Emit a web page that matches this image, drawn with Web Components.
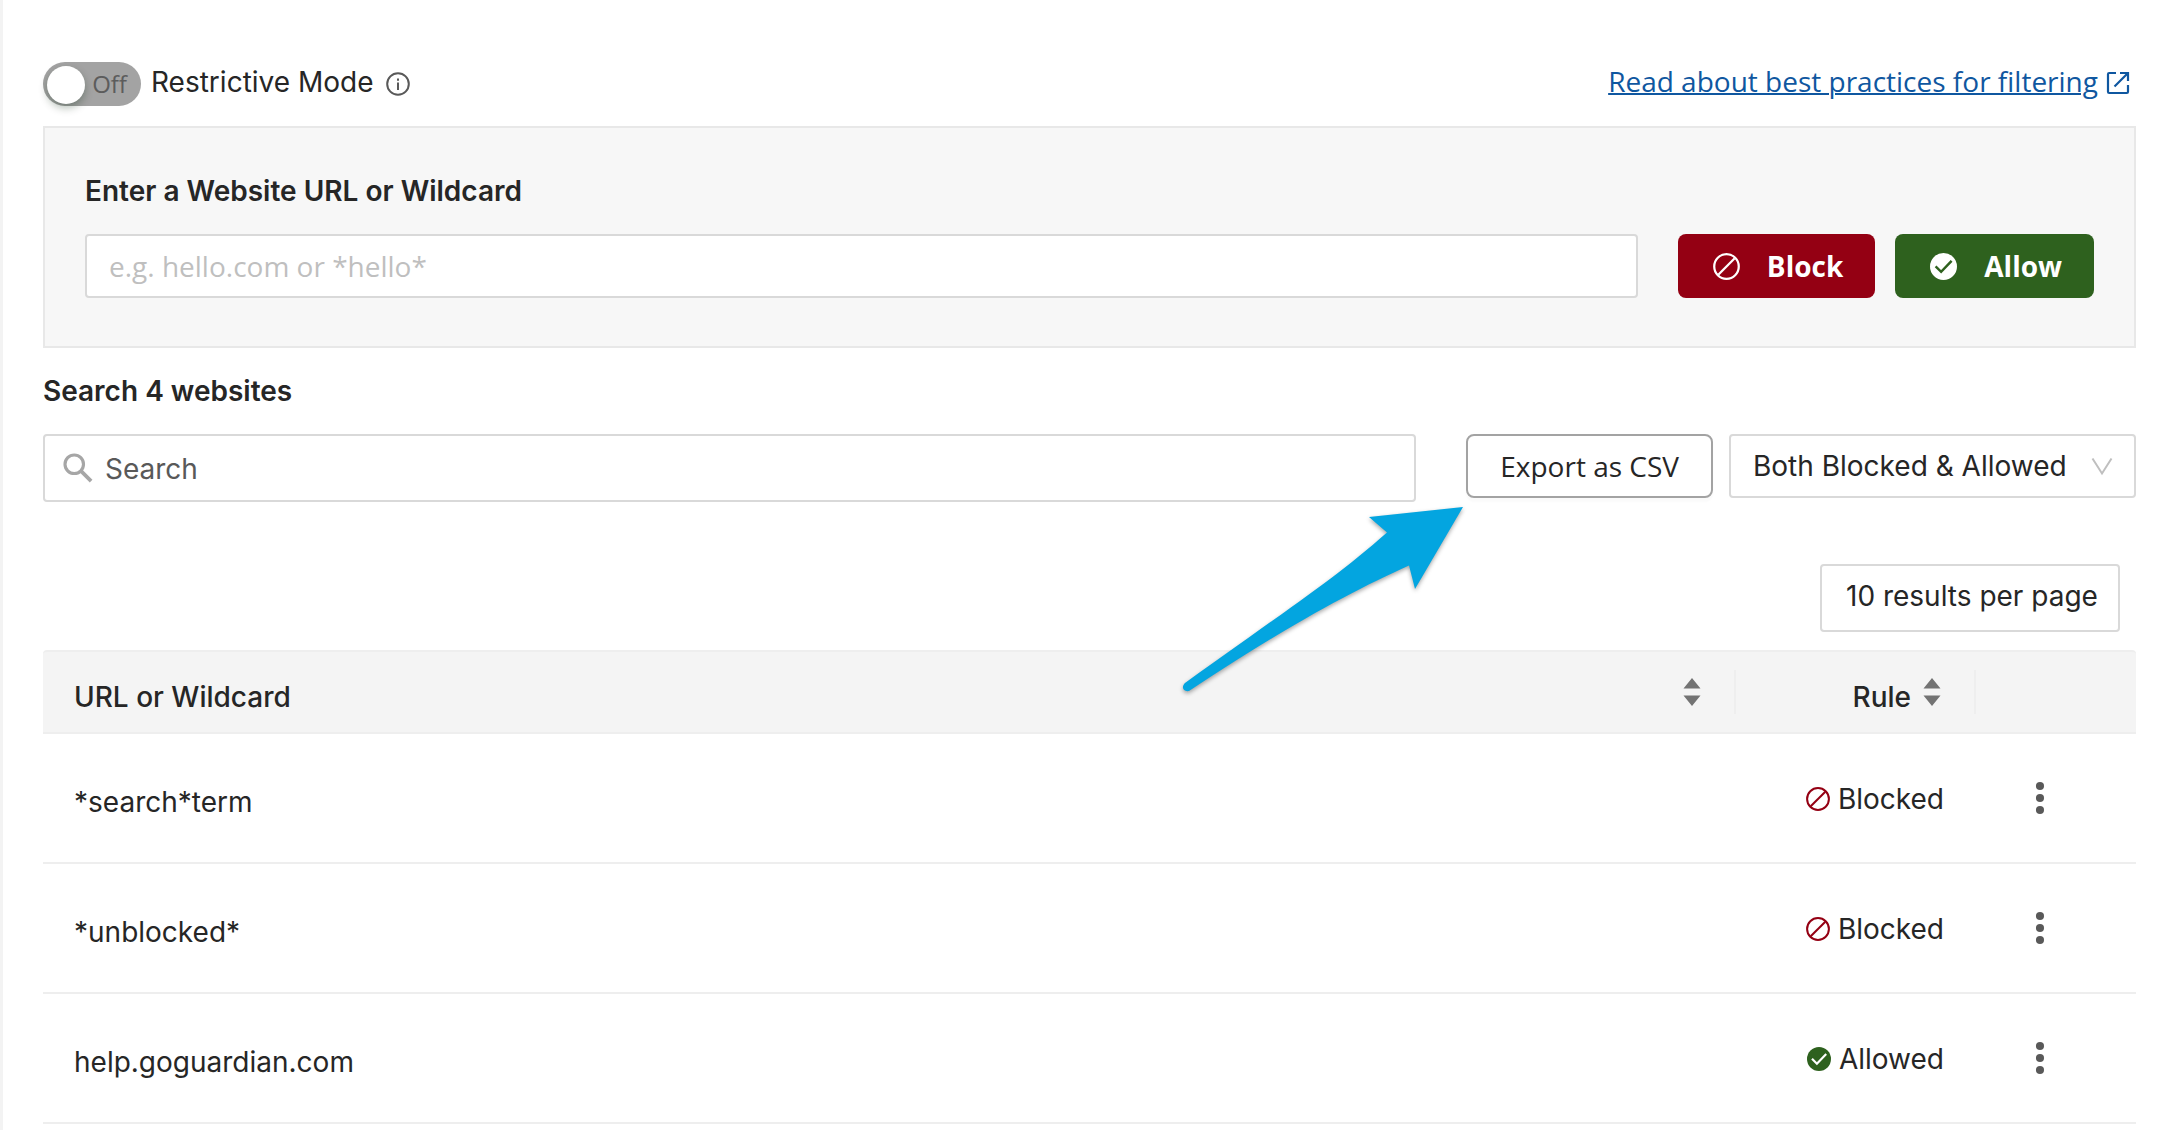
<!DOCTYPE html>
<html lang="en">
<head>
<meta charset="utf-8">
<meta name="viewport" content="width=device-width, initial-scale=1">
<title>Website Filtering</title>
<style>
  body {
    margin: 0;
    font: 28px/40px Inter, "Liberation Sans", sans-serif;
    color: #262626;
    background: #fff;
    --humanist: "Open Sans", "Noto Sans", sans-serif;
    --line: #d9d9d9;
    --soft-line: #eee;
    --red: #940013;
    --green: #2e611e;
  }
</style>
</head>
<body>
<filter-page></filter-page>

<script>
const icons = {
  info: `<circle cx="12" cy="12" r="10.8" fill="none" stroke="currentColor" stroke-width="2"/>
    <path d="M11 10.5h2V18h-2zM11 6.5h2v2.2h-2z" fill="currentColor"/>`,
  external: `<path d="M10 2H3.2A1.2 1.2 0 0 0 2 3.2v17.6A1.2 1.2 0 0 0 3.2 22h17.6a1.2 1.2 0 0 0 1.2-1.2V14M14 2h8v8M21.5 2.5 8.5 15.5" fill="none" stroke="currentColor" stroke-width="2.2"/>`,
  block: `<circle cx="12" cy="12" r="10.9" fill="none" stroke="currentColor" stroke-width="2"/>
    <path d="M19.3 4.7 4.7 19.3" stroke="currentColor" stroke-width="2"/>`,
  check: `<circle cx="12" cy="12" r="12" fill="currentColor"/>
    <path d="m5 11.8 4.9 4.9L19.2 7" fill="none" stroke="var(--mark, #fff)" stroke-width="2.2"/>`,
  search: `<circle cx="9" cy="9" r="7.4" fill="none" stroke="currentColor" stroke-width="2.5"/>
    <path d="m14.5 14.5 8 8" stroke="currentColor" stroke-width="3"/>`,
  chevron: `<path d="m2.5 4.5 9.5 15 9.5-15" fill="none" stroke="currentColor" stroke-width="2"/>`,
  more: `<circle cx="12" cy="4" r="2.7" fill="currentColor"/>
    <circle cx="12" cy="12" r="2.7" fill="currentColor"/>
    <circle cx="12" cy="20" r="2.7" fill="currentColor"/>`,
};

class UiIcon extends HTMLElement {
  constructor() {
    super();
    this.attachShadow({ mode: 'open' });
  }

  connectedCallback() {
    this.shadowRoot.innerHTML = `
      <style>
        :host { display: inline-block; flex: none; width: 24px; height: 24px; }
        svg { display: block; width: 100%; height: 100%; overflow: visible; }
      </style>
      <svg viewBox="0 0 24 24" aria-hidden="true">${icons[this.getAttribute('name')]}</svg>
    `;
  }
}

class ModeSwitch extends HTMLElement {
  constructor() {
    super();
    this.attachShadow({ mode: 'open' }).innerHTML = `
      <style>
        :host { display: flex; align-items: flex-start; gap: 10px; }
        .track {
          position: relative;
          display: flex;
          align-items: center;
          justify-content: flex-end;
          box-sizing: border-box;
          width: 98px;
          height: 44px;
          padding-right: 14px;
          border-radius: 22px;
          background: #a3a3a3;
          color: #5c5c5c;
          font: 24px/32px var(--humanist);
        }
        /* The checkbox is drawn as the knob that lies over the track */
        input {
          appearance: none;
          position: absolute;
          left: 4px;
          top: 4px;
          width: 38px;
          height: 38px;
          margin: 0;
          border-radius: 50%;
          background: #fff;
          box-shadow: 0 4px 8px rgba(0, 35, 11, 0.3);
        }
        input:checked { left: 56px; }
        ui-icon { margin: 10px 0 0 2px; color: #595959; }
      </style>
      <span class="track">
        <input type="checkbox" role="switch" id="mode">
        <span>Off</span>
      </span>
      <label for="mode"><slot></slot></label>
      <ui-icon name="info"></ui-icon>
    `;
  }
}

class UiButton extends HTMLElement {
  constructor() {
    super();
    this.attachShadow({ mode: 'open' }).innerHTML = `
      <style>
        :host { display: block; flex: none; }
        button {
          display: flex;
          align-items: center;
          gap: 27px;
          height: 64px;
          padding: 0 32px 0 35px;
          border: 0;
          border-radius: 8px;
          color: #fff;
          font: 700 28px/40px var(--humanist);
          cursor: pointer;
        }
        :host([kind="block"]) button { background: var(--red); }
        :host([kind="allow"]) button { background: var(--green); --mark: var(--green); }
        :host([kind="plain"]) button {
          padding: 0 32px;
          border: 2px solid #a3a3a3;
          background: #fff;
          color: #262626;
          font-weight: 400;
          box-shadow: 0 4px 2px rgba(0, 0, 0, 0.02);
        }
        ::slotted(ui-icon) { width: 27px; height: 27px; }
      </style>
      <button type="button"><slot name="icon"></slot><span><slot></slot></span></button>
    `;
  }
}

class UiSelect extends HTMLElement {
  constructor() {
    super();
    this.attachShadow({ mode: 'open' });
  }

  connectedCallback() {
    const options = this.getAttribute('options').split('|');
    const arrow = this.hasAttribute('arrow');
    this.shadowRoot.innerHTML = `
      <style>
        :host { display: grid; align-items: center; flex: none; }
        select, ui-icon { grid-area: 1 / 1; }
        select {
          appearance: none;
          box-sizing: border-box;
          width: 100%;
          height: 68px;
          padding: 0 20px 4px 24px;
          border: 2px solid var(--line);
          border-radius: 4px;
          background: #fff;
          color: inherit;
          font: inherit;
        }
        :host([arrow]) select { height: 64px; padding: 0 67px 0 22px; }
        ui-icon { justify-self: end; margin-right: 22px; color: #bfbfbf; pointer-events: none; }
      </style>
      <select aria-label="${this.getAttribute('label')}">
        ${options.map((text) => `<option>${text}</option>`).join('')}
      </select>
      ${arrow ? '<ui-icon name="chevron"></ui-icon>' : ''}
    `;
  }
}

class UrlForm extends HTMLElement {
  constructor() {
    super();
    this.attachShadow({ mode: 'open' }).innerHTML = `
      <style>
        :host {
          display: block;
          padding: 43px 40px 48px;
          border: 2px solid #e8e8e8;
          background: #f7f7f7;
        }
        label { display: block; margin-bottom: 23px; font-weight: 600; }
        .row { display: flex; align-items: flex-start; gap: 20px; }
        input {
          flex: 1;
          min-width: 0;
          box-sizing: border-box;
          height: 64px;
          margin-right: 20px;
          padding: 0 22px;
          border: 2px solid var(--line);
          border-radius: 4px;
          background: #fff;
          color: inherit;
          font: 28px/40px var(--humanist);
        }
        input::placeholder { color: #bfbfbf; opacity: 1; }
      </style>
      <label for="url">Enter a Website URL or Wildcard</label>
      <div class="row">
        <input id="url" type="text" placeholder="e.g. hello.com or *hello*">
        <ui-button kind="block"><ui-icon slot="icon" name="block"></ui-icon>Block</ui-button>
        <ui-button kind="allow"><ui-icon slot="icon" name="check"></ui-icon>Allow</ui-button>
      </div>
    `;
  }
}

class PointerArrow extends HTMLElement {
  constructor() {
    super();
    this.attachShadow({ mode: 'open' }).innerHTML = `
      <style>
        :host { display: block; width: 284px; pointer-events: none; }
        svg { display: block; overflow: visible; filter: drop-shadow(0 2px 2px rgba(0, 0, 0, 0.35)); }
      </style>
      <svg viewBox="0 0 284 200" width="284" height="200" aria-hidden="true">
        <path fill="#03a5e0" d="M281 9 187 19 205 34.5C150 83 110 108 3 185C-1 189 1 194 7 193C100 131 170 93 227 67.5L233 91Z"/>
      </svg>
    `;
  }
}

class SearchBar extends HTMLElement {
  constructor() {
    super();
    this.attachShadow({ mode: 'open' }).innerHTML = `
      <style>
        :host { display: block; }
        label { display: block; margin-bottom: 23px; font-weight: 600; }
        .row { display: flex; align-items: flex-start; gap: 16px; }
        .field {
          flex: 1;
          display: flex;
          align-items: center;
          gap: 12px;
          box-sizing: border-box;
          min-width: 0;
          height: 68px;
          margin-right: 34px;
          padding: 0 18px;
          border: 2px solid var(--line);
          border-radius: 4px;
          background: #fff;
        }
        .field ui-icon { width: 30px; height: 30px; color: #a6a6a6; }
        input {
          flex: 1;
          min-width: 0;
          padding: 2px 0 0;
          border: 0;
          outline: 0;
          background: none;
          color: inherit;
          font: inherit;
        }
        input::placeholder { color: #595959; opacity: 1; }
        .export { position: relative; }
        pointer-arrow { position: absolute; top: 100%; right: 100%; z-index: 1; }
      </style>
      <label for="search"><slot></slot></label>
      <div class="row">
        <div class="field">
          <ui-icon name="search"></ui-icon>
          <input id="search" type="text" placeholder="Search">
        </div>
        <div class="export">
          <ui-button kind="plain">Export as CSV</ui-button>
          <pointer-arrow></pointer-arrow>
        </div>
        <ui-select arrow label="Rule filter" options="Both Blocked &amp; Allowed"></ui-select>
      </div>
    `;
  }
}

const rules = [
  { url: '*search*term', allowed: false },
  { url: '*unblocked*', allowed: false },
  { url: 'help.goguardian.com', allowed: true },
];

class RuleTable extends HTMLElement {
  constructor() {
    super();
    const sorter = `
      <svg class="sorter" viewBox="0 0 18 28" width="18" height="28" aria-hidden="true">
        <path d="M9 0 17.5 10.5H.5zM9 28 .5 17.5h17z" fill="#737373"/>
      </svg>`;

    this.attachShadow({ mode: 'open' }).innerHTML = `
      <style>
        :host { display: block; }
        table { width: 100%; border-spacing: 0; table-layout: fixed; }
        .rule { width: 240px; }
        .actions { width: 160px; }
        th {
          height: 80px;
          padding: 0;
          border: solid var(--soft-line);
          border-width: 2px 0;
          background: #f4f4f4;
          font-weight: 500;
          text-align: left;
        }
        th:first-child { border-top-left-radius: 4px; }
        th:last-child { border-top-right-radius: 4px; }
        .head {
          display: flex;
          align-items: center;
          justify-content: space-between;
          gap: 12px;
          width: 100%;
          height: 44px;
          padding: 0 33px 0 31px;
          border: 0;
          border-right: 2px solid var(--soft-line);
          background: none;
          color: inherit;
          font: inherit;
          cursor: pointer;
        }
        .rule .head { justify-content: flex-end; }
        .head span { padding-top: 10px; }
        td { height: 128px; padding: 0; border-bottom: 2px solid var(--soft-line); }
        .url { height: 120px; padding: 8px 31px 0; }
        .status {
          display: flex;
          align-items: center;
          justify-content: flex-end;
          gap: 8px;
          padding: 2px 32px 0 0;
        }
        .blocked ui-icon { color: var(--red); }
        .allowed ui-icon { color: var(--green); }
        .menu {
          display: flex;
          margin-left: 46px;
          padding: 0;
          border: 0;
          background: none;
          color: #595959;
          cursor: pointer;
        }
        .menu ui-icon { width: 36px; height: 36px; }
      </style>
      <table>
        <thead>
          <tr>
            <th scope="col"><button type="button" class="head"><span>URL or Wildcard</span>${sorter}</button></th>
            <th scope="col" class="rule"><button type="button" class="head"><span>Rule</span>${sorter}</button></th>
            <th class="actions"></th>
          </tr>
        </thead>
        <tbody>
          ${rules.map(({ url, allowed }) => `
            <tr>
              <td class="url">${url}</td>
              <td>
                <div class="status ${allowed ? 'allowed' : 'blocked'}">
                  <ui-icon name="${allowed ? 'check' : 'block'}"></ui-icon>
                  <span>${allowed ? 'Allowed' : 'Blocked'}</span>
                </div>
              </td>
              <td><button type="button" class="menu" aria-label="Actions for ${url}"><ui-icon name="more"></ui-icon></button></td>
            </tr>
          `).join('')}
        </tbody>
      </table>
    `;
  }
}

class FilterPage extends HTMLElement {
  constructor() {
    super();
    this.attachShadow({ mode: 'open' }).innerHTML = `
      <style>
        :host {
          display: block;
          box-sizing: border-box;
          min-height: 100vh;
          padding: 62px 28px 0 40px;
          border-left: 3px solid #f3f3f3;
        }
        header {
          display: flex;
          align-items: flex-start;
          justify-content: space-between;
          margin-bottom: 20px;
        }
        .help {
          display: flex;
          gap: 8px;
          padding-right: 6px;
          color: #0f57a0;
          font-family: var(--humanist);
          line-height: 38px;
          text-decoration-thickness: 2px;
        }
        .help ui-icon { margin-top: 9px; }
        search-bar { margin: 23px 0 62px; }
        .paging { display: flex; justify-content: flex-end; margin: 0 16px 18px 0; }
      </style>
      <header>
        <mode-switch>Restrictive Mode</mode-switch>
        <a class="help" href="#best-practices">Read about best practices for filtering<ui-icon name="external"></ui-icon></a>
      </header>
      <url-form></url-form>
      <search-bar>Search 4 websites</search-bar>
      <div class="paging">
        <ui-select label="Page size" options="10 results per page"></ui-select>
      </div>
      <rule-table></rule-table>
    `;
  }
}

customElements.define('ui-icon', UiIcon);
customElements.define('mode-switch', ModeSwitch);
customElements.define('ui-button', UiButton);
customElements.define('ui-select', UiSelect);
customElements.define('url-form', UrlForm);
customElements.define('pointer-arrow', PointerArrow);
customElements.define('search-bar', SearchBar);
customElements.define('rule-table', RuleTable);
customElements.define('filter-page', FilterPage);
</script>
</body>
</html>
